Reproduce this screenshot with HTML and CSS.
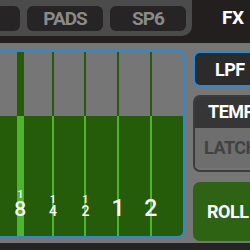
FILE: index.html
```html
<!DOCTYPE html>
<html lang="en">
<head>
    <meta charset="UTF-8">
    <title>FX Roll</title>
    <link rel="stylesheet" href="styles.css">
</head>
<body>

<!-- Top tab bar -->
<div class="topbar">
    <div class="tabstrip">
        <div class="tab tab-hidden"></div>
        <div class="tab">PADS</div>
        <div class="tab">SP6</div>
    </div>
    <div class="tab-active">FX</div>
</div>

<!-- Main area -->
<div class="main">
    <div class="panel">
        <div class="col">
            <div class="tick selected"></div>
            <div class="label"><span class="num">1</span><span class="den big">8</span></div>
        </div>
        <div class="col">
            <div class="tick"></div>
            <div class="label"><span class="num">1</span><span class="den">4</span></div>
        </div>
        <div class="col">
            <div class="tick"></div>
            <div class="label"><span class="num">1</span><span class="den">2</span></div>
        </div>
        <div class="col">
            <div class="tick"></div>
            <div class="label"><span class="whole">1</span></div>
        </div>
        <div class="col">
            <div class="tick"></div>
            <div class="label"><span class="whole">2</span></div>
        </div>
    </div>

    <div class="side">
        <div class="btn btn-lpf">LPF</div>
        <div class="btn-group">
            <div class="btn-temp">TEMP</div>
            <div class="btn-latch">LATCH</div>
        </div>
        <div class="btn btn-roll">ROLL</div>
    </div>
</div>

<div class="bottombar"></div>

</body>
</html>
```

FILE: styles.css
```css
body {
    margin: 0;
    padding: 0;
    width: 250px;
    height: 250px;
    overflow: hidden;
    background-color: #767676;
    font-family: Roboto, "DejaVu Sans Condensed", sans-serif;
    font-weight: bold;
}

/* Top tab bar */
.topbar {
    display: flex;
    height: 43px;
    background-color: #231f1f;
}
.tabstrip {
    display: flex;
    gap: 7px;
    width: 192px;
    height: 36px;
    padding-top: 6px;
    box-sizing: border-box;
    background-color: #4b4b4b;
    border-bottom-right-radius: 10px;
    overflow: hidden;
}
.tab {
    flex: 0 0 76px;
    height: 25px;
    border-radius: 6px;
    background-color: #262424;
    color: #8a8a8a;
    font-size: 19px;
    letter-spacing: -1px;
    line-height: 26px;
    text-align: center;
}
.tab-hidden {
    margin-left: -56px;
}
.tab-active {
    flex: 1;
    padding: 7px 0 0 30px;
    color: #fff;
    font-size: 19px;
    letter-spacing: -0.5px;
    line-height: 22px;
}

/* Main area */
.main {
    display: flex;
    gap: 8px;
    height: 200px;
    padding-top: 7px;
    box-sizing: border-box;
}
.panel {
    display: flex;
    flex: 0 0 185px;
    height: 188px;
    padding-left: 4px;
    box-sizing: border-box;
    border: 2px solid #2a8ad8;
    border-left: none;
    border-radius: 0 7px 7px 0;
    background: linear-gradient(#767676 0 64px, #245c0a 64px);
    overflow: hidden;
}
.col {
    position: relative;
    display: flex;
    justify-content: center;
    flex: 0 0 32.6px;
}
.tick {
    width: 2px;
    background: linear-gradient(#245c0a 0 64px, #4cb52a 64px);
}
.tick.selected {
    width: 7px;
}
.label {
    position: absolute;
    left: 50%;
    bottom: 18px;
    transform: translateX(-50%);
    display: flex;
    flex-direction: column;
    align-items: center;
    color: #fff;
    font-weight: 500;
}
.num {
    font-size: 11px;
    line-height: 11px;
}
.den {
    font-size: 14px;
    line-height: 13px;
}
.den.big {
    font-size: 21px;
    line-height: 18px;
}
.whole {
    font-size: 23px;
    line-height: 19px;
}

/* Right side buttons */
.side {
    display: flex;
    flex-direction: column;
    flex: 0 0 70px;
    padding-top: 1px;
    font-size: 18px;
    letter-spacing: -0.5px;
}
.btn {
    box-sizing: border-box;
    border-radius: 7px;
    color: #fff;
    padding-left: 20px;
}
.btn-lpf {
    height: 36px;
    line-height: 34px;
    background-color: #2b2b2b;
    border: 2px solid #2a8ad8;
}
.btn-group {
    margin-top: 8px;
    height: 73px;
    border: 2px solid #3c3c3c;
    border-right: none;
    border-radius: 7px 0 0 7px;
    overflow: hidden;
}
.btn-temp {
    height: 31px;
    line-height: 30px;
    padding-left: 13px;
    background-color: #363636;
    color: #fff;
}
.btn-latch {
    height: 40px;
    line-height: 40px;
    padding-left: 9px;
    background-color: #6e6e6e;
    color: #424242;
}
.btn-roll {
    margin-top: 10px;
    height: 59px;
    line-height: 59px;
    padding-left: 14px;
    background-color: #2d6312;
}

.bottombar {
    height: 7px;
    background-color: #242424;
}
```
